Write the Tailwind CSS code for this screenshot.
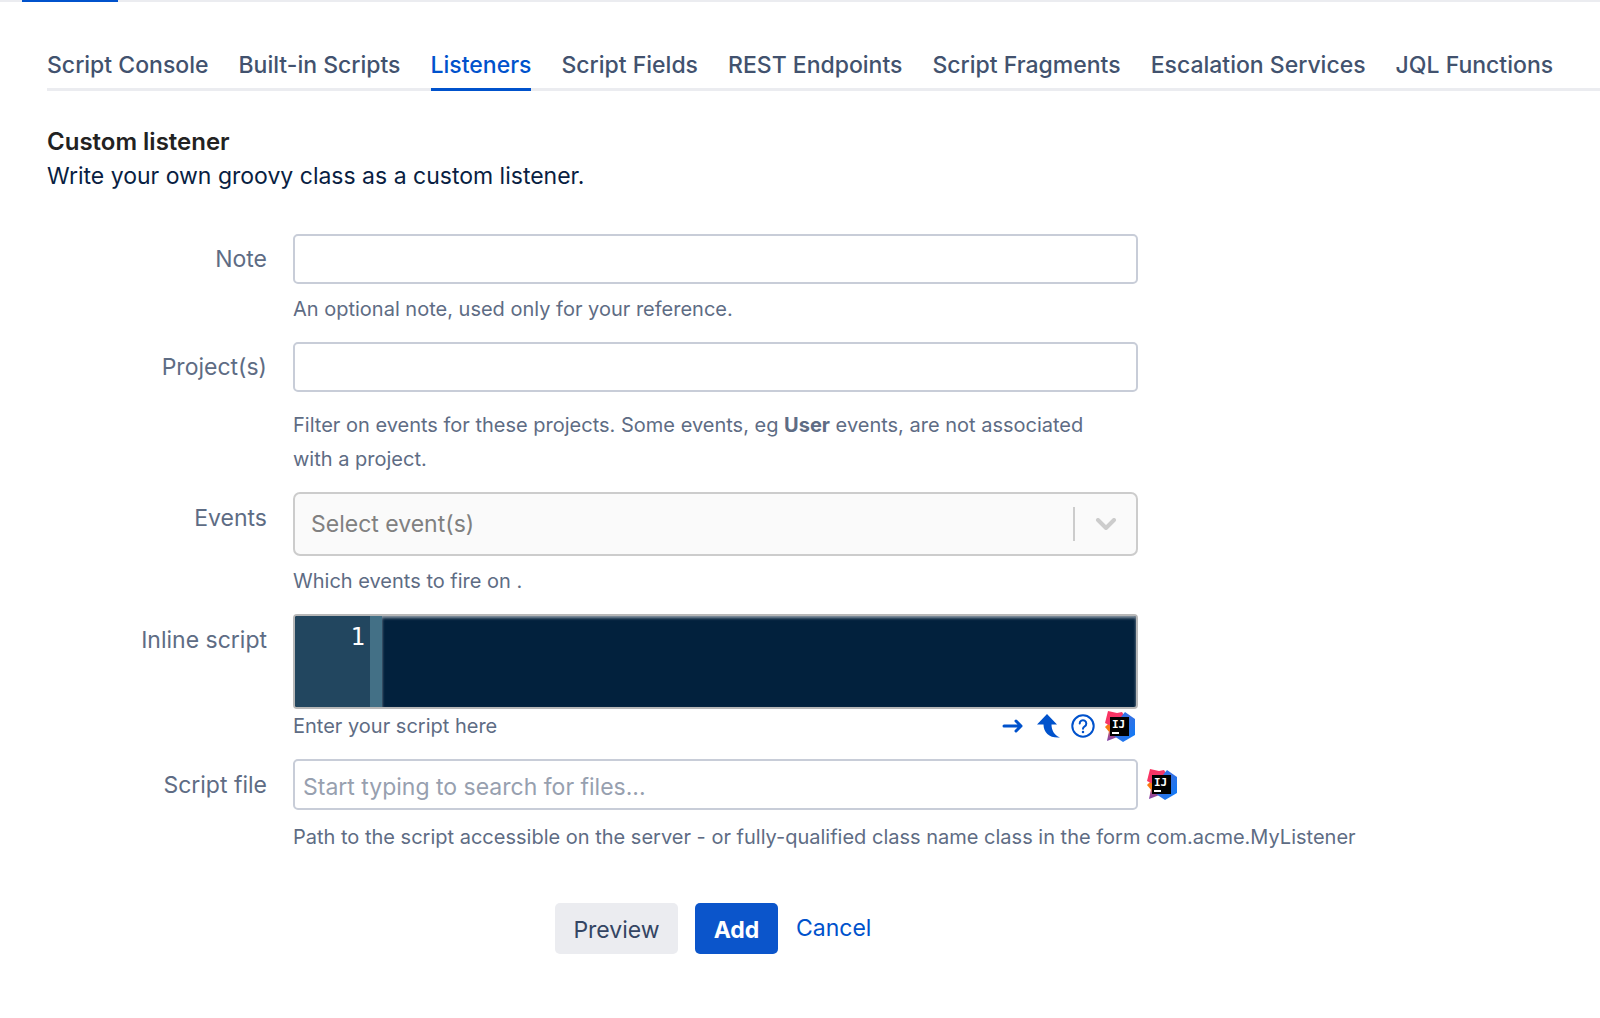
<!DOCTYPE html>
<html lang="en">
  <head>
    <meta charset="UTF-8" />
    <meta name="viewport" content="width=device-width, initial-scale=1.0" />
    <!-- tailwind cdn -->
    <script src="https://cdn.jsdelivr.net/npm/@tailwindcss/browser@4"></script>
    <title>Custom listener</title>
  </head>
  <body class="bg-white font-['Inter',sans-serif] text-[23px] text-[#091e42]">
    <!-- shared icon -->
    <svg class="absolute h-0 w-0" aria-hidden="true">
      <defs>
        <linearGradient id="ij-pink" x1="0" y1="0" x2="1" y2="1">
          <stop offset="0" stop-color="#fe315d" />
          <stop offset="1" stop-color="#e8407a" />
        </linearGradient>
        <linearGradient id="ij-orange" x1="0" y1="0" x2="0" y2="1">
          <stop offset="0" stop-color="#f97a12" />
          <stop offset="0.5" stop-color="#a8508c" />
          <stop offset="1" stop-color="#7d3fa8" />
        </linearGradient>
        <linearGradient id="ij-blue" x1="0" y1="0" x2="1" y2="1">
          <stop offset="0" stop-color="#087cfa" />
          <stop offset="0.4" stop-color="#3a6fe0" />
          <stop offset="1" stop-color="#087cfa" />
        </linearGradient>
      </defs>
      <symbol id="intellij" viewBox="0 0 30 31">
        <path d="M0 16 5 11 9 24 5 22Z" fill="#f97a12" />
        <path d="M4 20 8 18 15 25 2 30Z" fill="url(#ij-orange)" />
        <path d="M3 0 12 2 17 1 22 9 12 18 0 12Z" fill="url(#ij-pink)" />
        <path d="M20 1 30 8 30 24 18 31 9 25 16 6Z" fill="url(#ij-blue)" />
        <path d="M5 6h19v19h-19z" fill="#000" />
        <text
          x="7"
          y="17"
          fill="#fff"
          font-family="DejaVu Sans Mono, monospace"
          font-size="11"
          font-weight="700"
        >
          IJ
        </text>
        <path d="M7 21h7v2h-7z" fill="#fff" />
      </symbol>
    </svg>

    <div class="h-[2px] bg-[#ebecf0] pl-[22px]">
      <div class="h-[2px] w-24 bg-[#0052cc]"></div>
    </div>

    <nav
      class="ml-[47px] mt-[42px] flex gap-[30px] whitespace-nowrap font-medium text-[#42526e] shadow-[inset_0_-3px_0_#ebecf0]"
    >
      <a class="h-[47px] leading-[42px]" href="#">Script Console</a>
      <a class="h-[47px] leading-[42px]" href="#">Built-in Scripts</a>
      <a
        class="h-[47px] border-b-[3px] border-[#0052cc] leading-[42px] text-[#0052cc]"
        href="#"
        aria-current="page"
        >Listeners</a
      >
      <a class="h-[47px] leading-[42px]" href="#">Script Fields</a>
      <a class="h-[47px] leading-[42px]" href="#">REST Endpoints</a>
      <a class="h-[47px] leading-[42px]" href="#">Script Fragments</a>
      <a class="h-[47px] leading-[42px]" href="#">Escalation Services</a>
      <a class="h-[47px] leading-[42px]" href="#">JQL Functions</a>
    </nav>

    <main class="ml-[47px] pt-[34px]">
      <h1 class="text-[24px] font-semibold leading-[34px] text-[#222222]">
        Custom listener
      </h1>
      <p class="leading-[34px]">
        Write your own groovy class as a custom listener.
      </p>

      <form class="mt-[41px] flex flex-col gap-4 text-[#5e6c84]">
        <!-- note -->
        <div class="grid grid-cols-[220px_1fr] gap-x-[26px]">
          <label class="text-right leading-[50px]" for="note">Note</label>
          <div>
            <input
              id="note"
              type="text"
              class="block h-[50px] w-full max-w-[845px] rounded-[5px] border-2 border-[#c8cdd8] bg-white px-2"
            />
            <p class="mt-2 text-[20px] leading-[34px]">
              An optional note, used only for your reference.
            </p>
          </div>
        </div>

        <!-- projects -->
        <div class="grid grid-cols-[220px_1fr] gap-x-[26px]">
          <label class="text-right leading-[50px]" for="projects"
            >Project(s)</label
          >
          <div>
            <input
              id="projects"
              type="text"
              class="block h-[50px] w-full max-w-[845px] rounded-[5px] border-2 border-[#c8cdd8] bg-white px-2"
            />
            <p class="mt-4 max-w-[820px] text-[20px] leading-[34px]">
              Filter on events for these projects. Some events, eg
              <b class="font-bold">User</b> events, are not associated with a
              project.
            </p>
          </div>
        </div>

        <!-- events -->
        <div class="grid grid-cols-[220px_1fr] gap-x-[26px]">
          <label class="text-right leading-[52px]" for="events">Events</label>
          <div>
            <div class="relative max-w-[845px]">
              <select
                id="events"
                class="block h-16 w-full appearance-none rounded-[7px] border-2 border-[#cccccc] bg-[#fafafa] px-4 text-[#808080]"
              >
                <option>Select event(s)</option>
              </select>
              <div
                class="pointer-events-none absolute inset-y-0 right-[21px] flex items-center gap-[20px]"
              >
                <span class="h-[34px] w-[2px] bg-[#cccccc]"></span>
                <svg
                  class="h-3 w-[22px]"
                  viewBox="0 0 22 12"
                  fill="none"
                  stroke="#cccccc"
                  stroke-width="4"
                  stroke-linecap="round"
                  stroke-linejoin="round"
                >
                  <path d="m3 2 8 8 8-8" />
                </svg>
              </div>
            </div>
            <p class="mt-2 text-[20px] leading-[34px]">
              Which events to fire on .
            </p>
          </div>
        </div>

        <!-- inline script -->
        <div class="grid grid-cols-[220px_1fr] gap-x-[26px]">
          <label class="text-right leading-[52px]" for="script"
            >Inline script</label
          >
          <div class="max-w-[845px]">
            <div
              class="flex h-[95px] overflow-hidden rounded-[4px] border-2 border-[#b8b8b8] bg-[#02213d]"
            >
              <div
                class="w-[87px] border-r-[12px] border-[#437086] bg-[#22465f] pr-[5px] text-right font-['DejaVu_Sans_Mono',monospace] text-[24px] leading-[42px] text-white"
              >
                1
              </div>
              <textarea
                id="script"
                class="flex-1 resize-none bg-transparent p-2 font-['DejaVu_Sans_Mono',monospace] text-white shadow-[inset_0_2px_3px_#8a98a5] outline-none"
              ></textarea>
            </div>
            <div class="flex items-center justify-between">
              <p class="text-[20px] leading-[34px]">Enter your script here</p>
              <div class="flex items-center pr-[3px] text-[#0052cc]">
                <button type="button" aria-label="Expand editor">
                  <svg
                    class="block h-6 w-6"
                    viewBox="0 0 24 24"
                    fill="none"
                    stroke="currentColor"
                    stroke-width="3"
                    stroke-linecap="round"
                    stroke-linejoin="round"
                  >
                    <path d="M3 12h17M15 7l5 5-5 5" />
                  </svg>
                </button>
                <button type="button" class="ml-3" aria-label="Pop out">
                  <svg
                    class="block h-6 w-6"
                    viewBox="0 0 24 24"
                    fill="currentColor"
                  >
                    <path
                      d="M10 0 20 10.500H14.500C14.500 16 17 21 23 23.500 13 24.500 6.500 19 6.500 10.500H0Z"
                    />
                  </svg>
                </button>
                <button type="button" class="ml-[10px]" aria-label="Help">
                  <svg
                    class="block h-6 w-6"
                    viewBox="0 0 24 24"
                    fill="none"
                    stroke="currentColor"
                    stroke-width="2"
                    stroke-linecap="round"
                    stroke-linejoin="round"
                  >
                    <circle cx="12" cy="12" r="10.700" />
                    <path
                      d="M8.700 9.500a3.300 3.300 0 1 1 5 2.800c-1.200.7-1.700 1.200-1.700 2.500"
                    />
                    <path d="M12 18v.1" stroke-width="2.500" />
                  </svg>
                </button>
                <button
                  type="button"
                  class="ml-[10px]"
                  aria-label="Open in IntelliJ"
                >
                  <svg class="block h-[31px] w-[30px]">
                    <use href="#intellij" />
                  </svg>
                </button>
              </div>
            </div>
          </div>
        </div>

        <!-- script file -->
        <div class="grid grid-cols-[220px_1fr] gap-x-[26px]">
          <label class="text-right leading-[52px]" for="file"
            >Script file</label
          >
          <div>
            <div class="flex items-center gap-[9px]">
              <input
                id="file"
                type="text"
                placeholder="Start typing to search for files..."
                class="block h-[51px] w-full max-w-[845px] rounded-[5px] border-2 border-[#c8cdd8] bg-white px-2 pt-1 placeholder:text-[#97a0af]"
              />
              <button type="button" aria-label="Open file in IntelliJ">
                <svg class="block h-[31px] w-[30px]">
                  <use href="#intellij" />
                </svg>
              </button>
            </div>
            <p class="mt-[10px] text-[20px] leading-[34px]">
              Path to the script accessible on the server - or fully-qualified
              class name class in the form com.acme.MyListener
            </p>
          </div>
        </div>

        <!-- actions -->
        <div class="ml-[508px] mt-[33px] flex items-center">
          <button
            type="submit"
            class="h-[51px] w-[123px] rounded-[5px] bg-[#ebecf0] pt-1 text-[#344563]"
          >
            Preview
          </button>
          <button
            type="submit"
            class="ml-[17px] h-[51px] w-[83px] rounded-[5px] bg-[#0b55cb] pt-1 font-bold text-white"
          >
            Add
          </button>
          <a class="ml-[18px] text-[#0052cc]" href="#">Cancel</a>
        </div>
      </form>
    </main>
  </body>
</html>
